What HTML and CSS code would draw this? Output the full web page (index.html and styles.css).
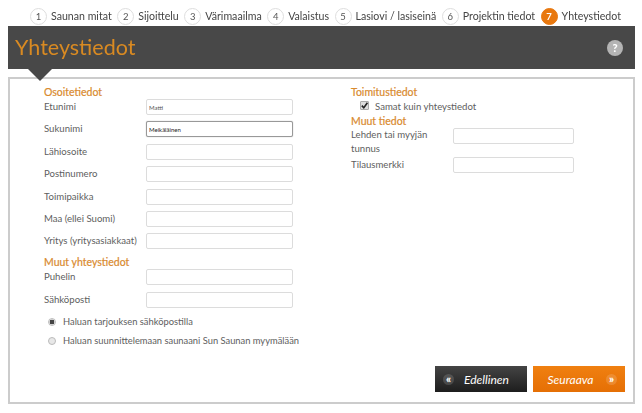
FILE: index.html
```html
<!DOCTYPE html>
<html lang="fi">
<head>
<meta charset="utf-8">
<title>Yhteystiedot</title>
<link rel="stylesheet" href="styles.css">
</head>
<body>
<nav class="steps">
  <span class="step"><b class="num">1</b>Saunan mitat</span>
  <span class="step"><b class="num">2</b>Sijoittelu</span>
  <span class="step"><b class="num">3</b>Värimaailma</span>
  <span class="step"><b class="num">4</b>Valaistus</span>
  <span class="step"><b class="num">5</b>Lasiovi / lasiseinä</span>
  <span class="step"><b class="num">6</b>Projektin tiedot</span>
  <span class="step current"><b class="num">7</b>Yhteystiedot</span>
</nav>
<header class="banner">
  <h1>Yhteystiedot</h1>
  <span class="help">?</span>
  <span class="pointer"></span>
</header>
<main class="panel">
  <div class="columns">
    <section class="left">
      <h2>Osoitetiedot</h2>
      <div class="row first"><label>Etunimi</label><input class="field" value="Matti"></div>
      <div class="row"><label>Sukunimi</label><input class="field focus" value="Meikäläinen"></div>
      <div class="row"><label>Lähiosoite</label><input class="field"></div>
      <div class="row"><label>Postinumero</label><input class="field"></div>
      <div class="row"><label>Toimipaikka</label><input class="field"></div>
      <div class="row"><label>Maa (ellei Suomi)</label><input class="field"></div>
      <div class="row"><label>Yritys (yritysasiakkaat)</label><input class="field"></div>
      <h2 class="sub">Muut yhteystiedot</h2>
      <div class="row first"><label>Puhelin</label><input class="field"></div>
      <div class="row"><label>Sähköposti</label><input class="field"></div>
      <div class="radio one"><span class="dot on"></span>Haluan tarjouksen sähköpostilla</div>
      <div class="radio"><span class="dot"></span>Haluan suunnittelemaan saunaani Sun Saunan myymälään</div>
    </section>
    <section class="right">
      <h2>Toimitustiedot</h2>
      <div class="check"><span class="box">
        <svg viewBox="0 0 9 9" width="9" height="9"><path d="M1.8 4.6 3.8 6.8 7.4 1.8" fill="none" stroke="#222" stroke-width="1.6"/></svg>
      </span>Samat kuin yhteystiedot</div>
      <h2 class="more">Muut tiedot</h2>
      <div class="row wide first tall"><label>Lehden tai myyjän tunnus</label><input class="field short"></div>
      <div class="row wide first"><label>Tilausmerkki</label><input class="field short"></div>
    </section>
  </div>
  <div class="actions">
    <a class="btn back"><span class="arrow">«</span><span class="cap">Edellinen</span></a>
    <a class="btn next"><span class="cap">Seuraava</span><span class="arrow">»</span></a>
  </div>
</main>
</body>
</html>
```
FILE: styles.css
```css
* { box-sizing: border-box; }
html, body { margin: 0; padding: 0; }
body {
  width: 642px;
  height: 413px;
  overflow: hidden;
  background: #fff;
  font-family: Lato, "Open Sans", sans-serif;
  color: #5e5e5e;
  font-size: 9.6px;
  padding: 6px 7px 0 8px;
  filter: blur(.35px);
}
.steps {
  display: flex;
  align-items: center;
  height: 20px;
  padding-left: 22px;
  font-size: 10.6px;
  color: #444;
  white-space: nowrap;
}
.step { display: flex; align-items: center; margin-right: 5.5px; }
.num {
  width: 17px;
  height: 17px;
  margin-right: 4px;
  border-radius: 50%;
  border: 1px solid #ddd;
  background: #fff;
  font-weight: 400;
  font-size: 9.5px;
  display: flex;
  align-items: center;
  justify-content: center;
  color: #555;
}
.current .num {
  background: #e8780f;
  border-color: #e8780f;
  color: #fff;
  font-weight: 700;
}
.banner {
  position: relative;
  height: 43px;
  background: #484848;
  padding-left: 7px;
  display: flex;
  align-items: center;
  justify-content: space-between;
}
h1 {
  margin: 0;
  font-size: 21.5px;
  font-weight: 400;
  color: #d98a22;
  line-height: 43px;
}
.help {
  width: 16px;
  height: 16px;
  margin-right: 12px;
  border-radius: 50%;
  background: #b4b4b4;
  color: #fff;
  font-weight: 900;
  font-size: 11px;
  display: flex;
  align-items: center;
  justify-content: center;
}
.pointer {
  position: absolute;
  left: 19px;
  top: 42px;
  width: 0;
  height: 0;
  border-left: 13px solid transparent;
  border-right: 13px solid transparent;
  border-top: 13px solid #484848;
  z-index: 1;
}
.panel {
  margin-top: 8px;
  height: 327px;
  border: 2px solid #ccc;
  background: #fff;
  position: relative;
  display: flex;
  flex-direction: column;
  justify-content: space-between;
}
.columns { display: flex; padding: 7px 0 0 34px; }
.left { width: 307px; }
.right { width: 224px; }
h2 {
  margin: 0;
  font-size: 10.5px;
  line-height: 13px;
  font-weight: 400;
  color: #d98a2e;
  -webkit-text-stroke: .2px #d98a2e;
}
h2.sub { margin-top: 7px; }
h2.more { margin-top: 1px; }
.row {
  display: flex;
  align-items: center;
  margin-top: 6.4px;
  min-height: 16px;
}
.row.first { margin-top: 0; }
.row label { width: 102px; flex: none; line-height: 14px; }
.row.tall { align-items: flex-start; height: 29px; }
.row.tall label { margin-top: -1px; padding-top: 1px; }
.field {
  width: 147px;
  height: 16px;
  padding: 0 2px;
  border: 1px solid #dcdcdc;
  border-radius: 2px;
  background: #fff;
  font-family: Lato, sans-serif;
  font-size: 6px;
  color: #555;
  outline: none;
}
.field.focus { border-color: #999; box-shadow: 0 0 1px #999; color: #222; }
.wide label { width: 102px; }
.short { width: 121px; }
.check {
  display: flex;
  align-items: center;
  padding-left: 9px;
  height: 15px;
}
.box {
  width: 9px;
  height: 9px;
  margin: -3px 6px 0 0;
  border: 1px solid #aaa;
  border-radius: 1px;
  background: #ddd;
  display: flex;
}
.box svg { margin: -1px; flex: none; }
.radio {
  display: flex;
  align-items: center;
  height: 14px;
  margin-top: 5px;
  padding-left: 4px;
  font-size: 9.35px;
}
.radio.one { margin-top: 7px; }
.dot {
  width: 8px;
  height: 8px;
  margin-right: 7px;
  border-radius: 50%;
  border: 1px solid #bbb;
  background: #e8e8e8;
}
.dot.on { background: radial-gradient(circle, #444 0 2.2px, #e8e8e8 2.6px); }
.actions {
  display: flex;
  justify-content: flex-end;
  gap: 6px;
  padding: 0 8px 10px 0;
}
.btn {
  width: 92px;
  height: 26px;
  padding: 0 8px;
  display: flex;
  align-items: center;
  justify-content: space-between;
  color: #fff;
}
.back { background: linear-gradient(#444, #1d1d1d); }
.next { background: linear-gradient(#f08010, #e56f05); }
.next .cap { padding-right: 6px; }
.cap { font-style: italic; font-size: 12px; flex: 1; text-align: center; }
.arrow {
  width: 11px;
  height: 11px;
  border-radius: 50%;
  background: rgba(255,255,255,.15);
  font-size: 11px;
  font-weight: 900;
  line-height: 9px;
  text-align: center;
}
```
